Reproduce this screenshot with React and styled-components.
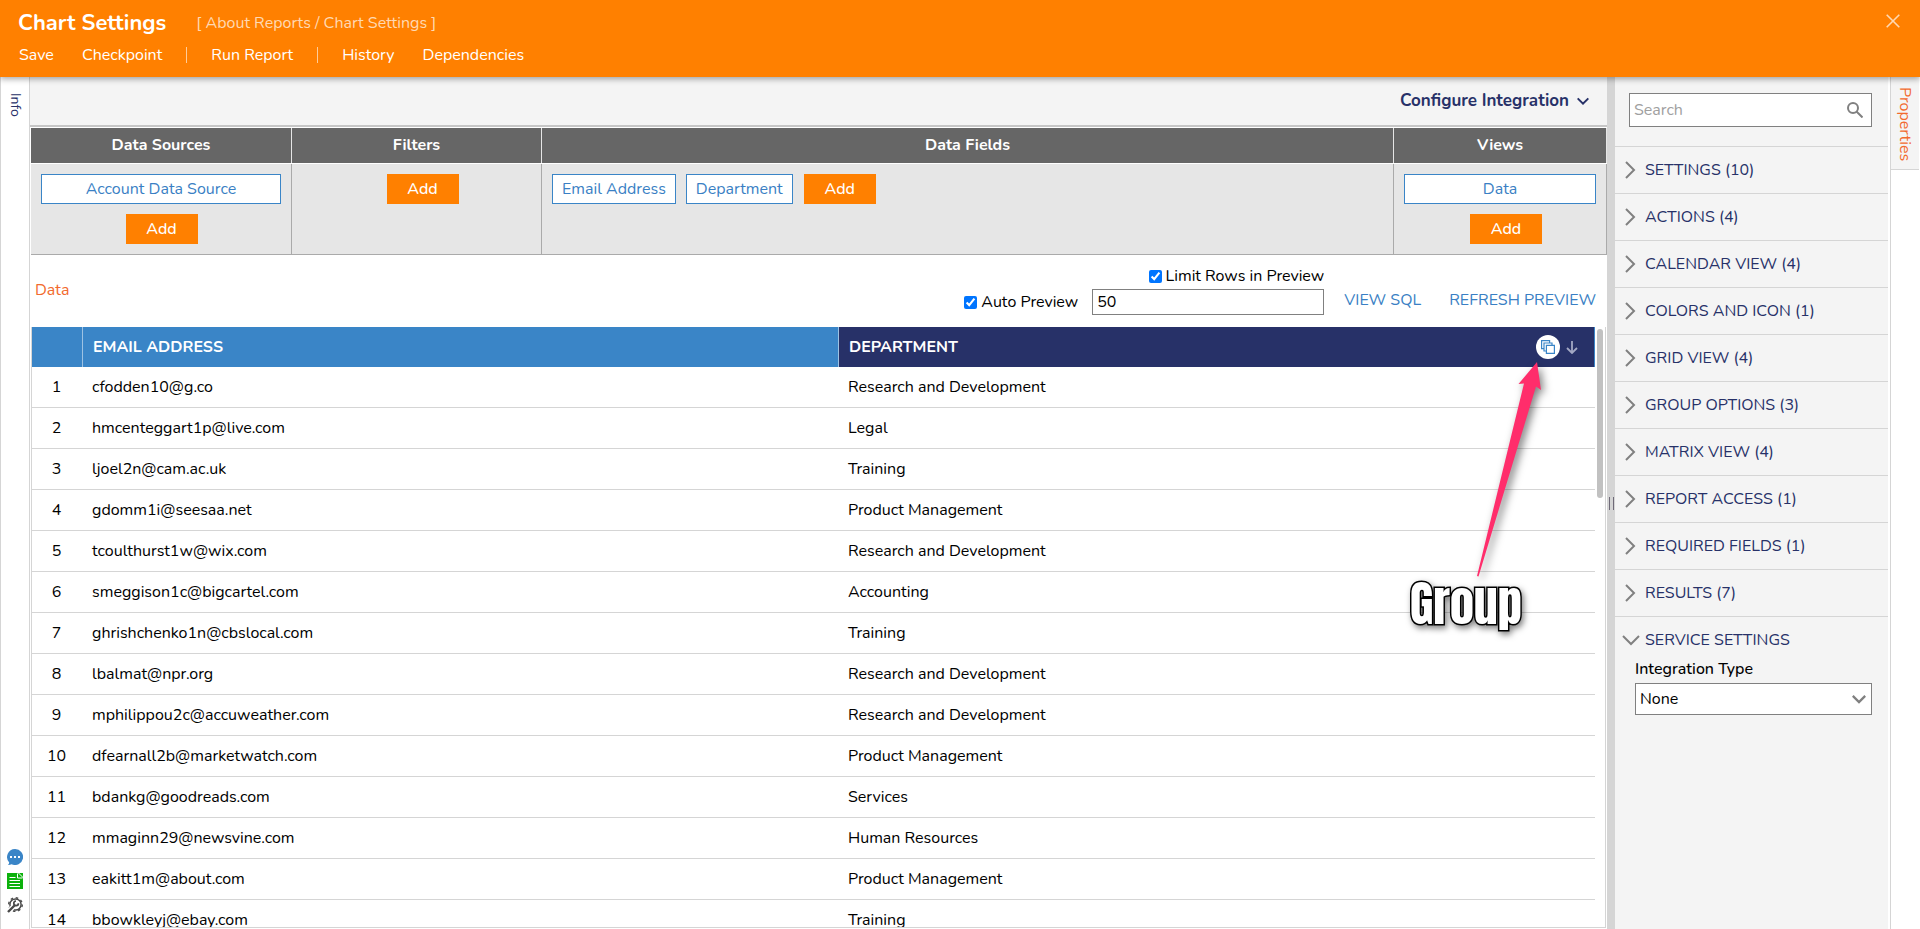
import React, { useState } from 'react';
import styled, { createGlobalStyle } from 'styled-components';

const fields = [
  ['cfodden10@g.co', 'Research and Development'],
  ['hmcenteggart1p@live.com', 'Legal'],
  ['ljoel2n@cam.ac.uk', 'Training'],
  ['gdomm1i@seesaa.net', 'Product Management'],
  ['tcoulthurst1w@wix.com', 'Research and Development'],
  ['smeggison1c@bigcartel.com', 'Accounting'],
  ['ghrishchenko1n@cbslocal.com', 'Training'],
  ['lbalmat@npr.org', 'Research and Development'],
  ['mphilippou2c@accuweather.com', 'Research and Development'],
  ['dfearnall2b@marketwatch.com', 'Product Management'],
  ['bdankg@goodreads.com', 'Services'],
  ['mmaginn29@newsvine.com', 'Human Resources'],
  ['eakitt1m@about.com', 'Product Management'],
  ['bbowkleyj@ebay.com', 'Training'],
];

const sections = [
  'SETTINGS (10)',
  'ACTIONS (4)',
  'CALENDAR VIEW (4)',
  'COLORS AND ICON (1)',
  'GRID VIEW (4)',
  'GROUP OPTIONS (3)',
  'MATRIX VIEW (4)',
  'REPORT ACCESS (1)',
  'REQUIRED FIELDS (1)',
  'RESULTS (7)',
];

const ChevronRight = () => (
  <svg width='18' height='18' viewBox='0 0 18 18' fill='none' stroke='#808080' strokeWidth='2'>
    <path d='M4 1l8 8-8 8' />
  </svg>
);

const ChevronDown = ({ size = 18, color = '#808080', weight = 2 }) => (
  <svg
    width={size}
    height={size}
    viewBox='0 0 18 18'
    fill='none'
    stroke={color}
    strokeWidth={weight}
  >
    <path d='M1 5l8 8 8-8' />
  </svg>
);

const App = () => {
  const [autoPreview, setAutoPreview] = useState(true);
  const [limitRows, setLimitRows] = useState(true);
  const [rowLimit, setRowLimit] = useState('50');

  return (
    <>
      <GlobalStyle />
      <Page>
        <Header>
          <TitleRow>
            <h1>Chart Settings</h1>
            <span>[ About Reports / Chart Settings ]</span>
          </TitleRow>
          <Menu>
            <MenuButton>Save</MenuButton>
            <MenuButton>Checkpoint</MenuButton>
            <MenuDivider />
            <MenuButton>Run Report</MenuButton>
            <MenuDivider />
            <MenuButton>History</MenuButton>
            <MenuButton>Dependencies</MenuButton>
          </Menu>
          <CloseButton aria-label='Close'>
            <svg width='14' height='14' viewBox='0 0 14 14' stroke='#ffd9b3' strokeWidth='1.6'>
              <path d='M0.7 0.7l12.6 12.6M13.3 0.7L0.7 13.3' />
            </svg>
          </CloseButton>
        </Header>

        <Body>
          <InfoRail>
            <RailTab>Info</RailTab>
            <RailIcons>
              <IconButton aria-label='Comments'>
                <svg width='16' height='16' viewBox='0 0 16 16'>
                  <path
                    d='M8 0a8 8 0 1 1-3.4 15.2C3.4 15.8 2 16 .8 15.9 1.8 15.1 2.2 14.2 2.2 13.4A8 8 0 0 1 8 0z'
                    fill='#3a85c7'
                  />
                  <path d='M3 7h2v2H3zM7 7h2v2H7zM11 7h2v2h-2z' fill='#fff' />
                </svg>
              </IconButton>
              <IconButton aria-label='Documentation'>
                <svg width='16' height='16' viewBox='0 0 16 16'>
                  <path d='M0 0h11l5 5v11H0z' fill='#0cb10c' />
                  <path d='M12 0h4v4z' fill='#0cb10c' />
                  <path
                    d='M10.5 0.5v4.5h5M2.5 4.5h6M2.5 7.5h10.5M2.5 10.5h10.5M2.5 13.5h10.5'
                    stroke='#fff'
                    fill='none'
                  />
                </svg>
              </IconButton>
              <IconButton aria-label='Tools'>
                <svg width='16' height='16' viewBox='0 0 16 16' fill='none' stroke='#4a4a4a'>
                  <circle cx='8.5' cy='7.5' r='5.6' strokeWidth='1.5' />
                  <circle
                    cx='8.5'
                    cy='7.5'
                    r='6.8'
                    strokeWidth='1.4'
                    strokeDasharray='2.6 2.74'
                  />
                  <path d='M0 16l7-7' stroke='#fff' strokeWidth='5' />
                  <path d='M1 15l7-7' strokeWidth='2.4' />
                  <path d='M11.4 6.2a2.3 2.3 0 1 1-2.4-2.2' strokeWidth='1.7' />
                </svg>
              </IconButton>
            </RailIcons>
          </InfoRail>

          <Main>
            <Toolbar>
              <ConfigureButton>
                Configure Integration
                <ChevronDown size={12} color='#273168' weight={3} />
              </ConfigureButton>
            </Toolbar>

            <Builder>
              <BuilderColumn>
                <BuilderHead>Data Sources</BuilderHead>
                <BuilderCell>
                  <Chip $wide>Account Data Source</Chip>
                  <AddButton>Add</AddButton>
                </BuilderCell>
              </BuilderColumn>
              <BuilderColumn>
                <BuilderHead>Filters</BuilderHead>
                <BuilderCell>
                  <AddButton $indent>Add</AddButton>
                </BuilderCell>
              </BuilderColumn>
              <BuilderColumn>
                <BuilderHead>Data Fields</BuilderHead>
                <BuilderCell $start>
                  <Chip>Email Address</Chip>
                  <Chip>Department</Chip>
                  <AddButton>Add</AddButton>
                </BuilderCell>
              </BuilderColumn>
              <BuilderColumn>
                <BuilderHead>Views</BuilderHead>
                <BuilderCell>
                  <Chip $wide>Data</Chip>
                  <AddButton $indent>Add</AddButton>
                </BuilderCell>
              </BuilderColumn>
            </Builder>

            <PreviewBar>
              <PreviewTitle>Data</PreviewTitle>
              <PreviewControls>
                <CheckLabel>
                  <input
                    type='checkbox'
                    checked={autoPreview}
                    onChange={(e) => setAutoPreview(e.target.checked)}
                  />
                  Auto Preview
                </CheckLabel>
                <LimitBox>
                  <CheckLabel>
                    <input
                      type='checkbox'
                      checked={limitRows}
                      onChange={(e) => setLimitRows(e.target.checked)}
                    />
                    Limit Rows in Preview
                  </CheckLabel>
                  <LimitInput
                    aria-label='Row limit'
                    value={rowLimit}
                    onChange={(e) => setRowLimit(e.target.value)}
                  />
                </LimitBox>
                <PreviewLink href='#sql'>VIEW SQL</PreviewLink>
                <PreviewLink href='#refresh'>REFRESH PREVIEW</PreviewLink>
              </PreviewControls>
            </PreviewBar>

            <TableWrap>
              <TableScroll>
                <Table>
                  <colgroup>
                    <col className='number' />
                    <col />
                    <col />
                  </colgroup>
                  <thead>
                    <tr>
                      <th aria-label='Row' />
                      <th>EMAIL ADDRESS</th>
                      <th className='active'>
                        <div className='head'>
                          DEPARTMENT
                          <HeadTools>
                            <GroupButton aria-label='Group'>
                              <svg
                                width='14'
                                height='14'
                                viewBox='0 0 14 14'
                                fill='#fff'
                                stroke='#3a85c7'
                                strokeWidth='1.2'
                              >
                                <path d='M0.6 0.6h8v8h-8z' />
                                <path d='M3 3h8v8H3z' />
                                <path d='M5.4 5.4h8v8h-8z' />
                              </svg>
                            </GroupButton>
                            <SortButton aria-label='Sort'>
                              <svg
                                width='12'
                                height='13'
                                viewBox='0 0 12 13'
                                fill='none'
                                stroke='#a3a8c4'
                                strokeWidth='1.8'
                              >
                                <path d='M6 0v12M1 7l5 5 5-5' />
                              </svg>
                            </SortButton>
                          </HeadTools>
                        </div>
                      </th>
                    </tr>
                  </thead>
                  <tbody>
                    {fields.map(([email, department], i) => (
                      <tr key={email}>
                        <td>{i + 1}</td>
                        <td>{email}</td>
                        <td>{department}</td>
                      </tr>
                    ))}
                  </tbody>
                </Table>
              </TableScroll>
              <ScrollTrack>
                <ScrollThumb />
              </ScrollTrack>
              <Callout>
                <svg width='80' height='225' viewBox='0 0 80 225'>
                  <path
                    d='M71 7L75 35 70 31.5 12.5 221.5 11 221 58 28.5 52.5 29z'
                    fill='#ff2d6b'
                  />
                </svg>
                <span>Group</span>
              </Callout>
            </TableWrap>
          </Main>

          <Splitter>
            <SplitterGrip />
          </Splitter>

          <Properties>
            <SearchBox>
              <input type='search' aria-label='Search' placeholder='Search' />
              <svg
                width='16'
                height='16'
                viewBox='0 0 16 16'
                fill='none'
                stroke='#808080'
                strokeWidth='2'
              >
                <circle cx='6' cy='6' r='5' />
                <path d='M9.5 9.5l6 6' />
              </svg>
            </SearchBox>
            {sections.map((name) => (
              <Section key={name}>
                <ChevronRight />
                {name}
              </Section>
            ))}
            <Section>
              <ChevronDown />
              SERVICE SETTINGS
            </Section>
            <Field>
              <label htmlFor='integration'>Integration Type</label>
              <SelectBox>
                <select id='integration' defaultValue='None'>
                  <option>None</option>
                </select>
                <ChevronDown size={14} weight={3} />
              </SelectBox>
            </Field>
          </Properties>

          <PropertiesRail>
            <RailTab $active>Properties</RailTab>
          </PropertiesRail>
        </Body>
      </Page>
    </>
  );
};

export default App;

const GlobalStyle = createGlobalStyle`
  * {
    box-sizing: border-box;
  }
  body {
    margin: 0;
    background: #fff;
    color: #000;
    font-family: Nunito, Lato, sans-serif;
    font-size: 16px;
    line-height: 22px;
  }
  button, input, select {
    font: inherit;
    color: inherit;
  }
  button {
    padding: 0;
    border: 0;
    background: none;
    cursor: pointer;
  }
  svg {
    display: block;
    flex: none;
  }
`;

const Page = styled.div`
  display: flex;
  flex-direction: column;
  height: 100vh;
  overflow: hidden;
`;

const Header = styled.header`
  position: relative;
  z-index: 2;
  flex: none;
  height: 77px;
  padding: 10px 18px;
  background: #ff8000;
  color: #fff;
  box-shadow: 0 2px 6px rgba(0, 0, 0, 0.35);
`;

const TitleRow = styled.div`
  display: flex;
  align-items: center;
  gap: 30px;
  height: 26px;
  h1 {
    margin: 0;
    font-size: 22px;
    font-weight: 700;
    line-height: 26px;
  }
  span {
    color: #ffd9b3;
  }
`;

const Menu = styled.nav`
  display: flex;
  align-items: center;
  gap: 28px;
  margin: 8px 0 0 1px;
`;

const MenuButton = styled.button`
  color: #fff;
`;

const MenuDivider = styled.span`
  width: 1px;
  height: 16px;
  margin: 0 -4px;
  background: #ffcc99;
`;

const CloseButton = styled.button`
  position: absolute;
  top: 14px;
  right: 20px;
`;

const Body = styled.div`
  display: flex;
  flex: 1;
  min-height: 0;
`;

const InfoRail = styled.aside`
  display: flex;
  flex: none;
  flex-direction: column;
  justify-content: space-between;
  width: 30px;
  border: solid #d5d5d5;
  border-width: 0 1px;
`;

const RailTab = styled.button`
  width: 28px;
  padding: ${({ $active }) => ($active ? '10px 0 8px' : '16px 0')};
  border-bottom: ${({ $active }) => ($active ? '1px solid #d5d5d5' : '0')};
  background: ${({ $active }) => ($active ? '#f4f4f4' : '#fff')};
  color: ${({ $active }) => ($active ? '#f26a2e' : '#273168')};
  font-size: ${({ $active }) => ($active ? '16px' : '14px')};
  line-height: 28px;
  writing-mode: vertical-rl;
`;

const RailIcons = styled.div`
  display: flex;
  flex-direction: column;
  align-items: center;
  gap: 8px;
  padding-bottom: 16px;
`;

const IconButton = styled.button``;

const Main = styled.main`
  display: flex;
  flex: 1;
  flex-direction: column;
  min-width: 0;
`;

const Toolbar = styled.div`
  display: flex;
  flex: none;
  justify-content: flex-end;
  height: 50px;
  padding-right: 18px;
  border-bottom: 2px solid #c6c6c6;
  background: #f4f4f4;
`;

const ConfigureButton = styled.button`
  display: flex;
  align-items: center;
  gap: 8px;
  color: #273168;
  font-size: 17px;
  font-weight: 700;
`;

const Builder = styled.div`
  display: grid;
  flex: none;
  grid-template-columns: 261px 250px 1fr 213px;
  margin: 1px 0 0 1px;
  border-bottom: 1px solid #aaa;
`;

const BuilderColumn = styled.section`
  display: flex;
  flex-direction: column;
`;

const BuilderHead = styled.h2`
  margin: 0 0 1px;
  border-right: 1px solid #e6e6e6;
  background: #666;
  color: #fff;
  font-size: 16px;
  font-weight: 700;
  line-height: 35px;
  text-align: center;
`;

const BuilderCell = styled.div`
  display: flex;
  flex: 1;
  flex-wrap: wrap;
  align-content: flex-start;
  justify-content: ${({ $start }) => ($start ? 'flex-start' : 'center')};
  gap: 10px;
  padding: 10px;
  border-right: 1px solid #aaa;
  background: #e6e6e6;
`;

const Chip = styled.button`
  width: ${({ $wide }) => ($wide ? '100%' : 'auto')};
  height: 30px;
  padding: 0 9px;
  border: 1px solid #3a85c7;
  background: #fff;
  color: #3a7fc4;
`;

const AddButton = styled.button`
  width: 72px;
  height: 30px;
  margin-left: ${({ $indent }) => ($indent ? '12px' : '1px')};
  background: #ff8000;
  color: #fff;
  font-weight: 500;
`;

const PreviewBar = styled.div`
  display: flex;
  flex: none;
  align-items: center;
  justify-content: space-between;
  height: 72px;
  padding: 0 11px 2px 5px;
`;

const PreviewTitle = styled.span`
  color: #f26a2e;
`;

const PreviewControls = styled.div`
  display: flex;
  align-items: flex-end;
  margin-bottom: 2px;
`;

const CheckLabel = styled.label`
  display: flex;
  align-items: center;
  gap: 4px;
  line-height: 26px;
  input {
    width: 13px;
    height: 13px;
    margin: 0;
  }
`;

const LimitBox = styled.div`
  display: flex;
  flex-direction: column;
  align-items: flex-end;
  margin: 0 20px 0 14px;
`;

const LimitInput = styled.input`
  width: 232px;
  height: 26px;
  padding: 0 4px;
  border: 1px solid #808080;
`;

const PreviewLink = styled.a`
  color: #3a7fc4;
  line-height: 30px;
  text-decoration: none;
  & + & {
    margin-left: 28px;
  }
`;

const TableWrap = styled.div`
  position: relative;
  display: flex;
  flex: 1;
  min-height: 0;
  margin: 0 1px 1px;
  border: 1px solid #d5d5d5;
  border-top: 0;
`;

const TableScroll = styled.div`
  flex: 1;
  overflow: hidden;
`;

const Table = styled.table`
  width: 100%;
  border-collapse: separate;
  border-spacing: 0;
  table-layout: fixed;
  .number {
    width: 51px;
  }
  th {
    height: 40px;
    padding: 0 10px;
    border-right: 1px solid #9dc2e3;
    background: #3a85c7;
    color: #fff;
    font-weight: 700;
    text-align: left;
  }
  th.active {
    border-right-color: #3a85c7;
    background: #273168;
  }
  .head {
    display: flex;
    align-items: center;
    justify-content: space-between;
  }
  td {
    height: 41px;
    padding: 0 9px;
    border-bottom: 1px solid #d5d5d5;
  }
  td:first-child {
    padding: 0 11px 0 9px;
    text-align: center;
  }
`;

const HeadTools = styled.div`
  display: flex;
  align-items: center;
  gap: 6px;
  margin-right: 6px;
`;

const GroupButton = styled.button`
  display: flex;
  align-items: center;
  justify-content: center;
  width: 24px;
  height: 24px;
  border-radius: 50%;
  background: #fff;
`;

const SortButton = styled.button``;

const ScrollTrack = styled.div`
  flex: none;
  width: 10px;
  padding: 2px;
`;

const ScrollThumb = styled.div`
  height: 169px;
  border-radius: 3px;
  background: #c1c1c1;
`;

/* annotation that floats over the table and points at the group button */
const Callout = styled.div`
  position: absolute;
  top: 28px;
  right: 59px;
  display: flex;
  flex-direction: column;
  align-items: flex-start;
  width: 140px;
  pointer-events: none;
  svg {
    align-self: flex-end;
    filter: drop-shadow(3px 4px 4px rgba(0, 0, 0, 0.5));
  }
  span {
    padding-left: 4px;
    font-family: Impact, Anton, Oswald, 'Roboto Condensed', 'DejaVu Sans Condensed', sans-serif;
    font-size: 48px;
    line-height: 48px;
    color: #fff;
    -webkit-text-stroke: 3px #000;
    paint-order: stroke fill;
    filter: drop-shadow(2px 3px 3px rgba(0, 0, 0, 0.5));
  }
`;

const Splitter = styled.div`
  display: flex;
  flex: none;
  align-items: center;
  justify-content: center;
  width: 8px;
  background: #d5d5d5;
`;

const SplitterGrip = styled.div`
  width: 5px;
  height: 13px;
  border: solid #6f6a78;
  border-width: 0 1px;
`;

const Properties = styled.aside`
  flex: none;
  width: 273px;
  background: #f4f4f4;
`;

const SearchBox = styled.div`
  display: flex;
  align-items: center;
  height: 34px;
  margin: 16px 16px 19px 14px;
  padding-right: 8px;
  border: 1px solid #808080;
  background: #fff;
  input {
    flex: 1;
    min-width: 0;
    padding: 0 4px;
    border: 0;
    outline: 0;
    background: none;
  }
  input::placeholder {
    color: #a0a0a0;
  }
`;

const Section = styled.button`
  display: flex;
  align-items: center;
  gap: 5px;
  width: 100%;
  height: 47px;
  padding-left: 7px;
  border-top: 1px solid #d5d5d5;
  color: #273168;
`;

const Field = styled.div`
  margin-top: -5px;
  padding: 0 16px 0 20px;
  label {
    display: block;
    margin-bottom: 3px;
    font-weight: 500;
  }
`;

const SelectBox = styled.div`
  display: grid;
  align-items: center;
  height: 32px;
  border: 1px solid #808080;
  background: #fff;
  select {
    grid-area: 1 / 1;
    height: 30px;
    padding: 0 4px;
    border: 0;
    background: none;
    appearance: none;
  }
  svg {
    grid-area: 1 / 1;
    justify-self: end;
    margin-right: 5px;
    pointer-events: none;
  }
`;

const PropertiesRail = styled.aside`
  flex: none;
  width: 30px;
  margin-left: 2px;
  border-left: 1px solid #d5d5d5;
`;
